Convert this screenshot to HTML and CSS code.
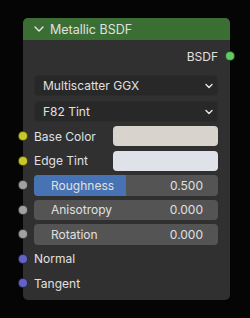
FILE: index.html
```html
<!DOCTYPE html>
<html lang="en">
<head>
    <meta charset="UTF-8">
    <title>Metallic BSDF</title>
    <link rel="stylesheet" href="styles.css">
</head>
<body>
    <div class="node">
        <div class="node-header">
            <svg class="chevron" width="10" height="8" viewBox="0 0 10 8"><path d="M1 2 L5 6 L9 2" fill="none" stroke="#e6e6e6" stroke-width="1.4" stroke-linecap="round" stroke-linejoin="round"/></svg>
            <span class="title">Metallic BSDF</span>
        </div>

        <div class="node-body">
            <div class="output-row">
                <span>BSDF</span>
                <span class="socket out green"></span>
            </div>

            <div class="dropdown first">
                <span>Multiscatter GGX</span>
                <svg width="8" height="6" viewBox="0 0 8 6"><path d="M1 1.5 L4 4.5 L7 1.5" fill="none" stroke="#e6e6e6" stroke-width="1.4" stroke-linecap="round" stroke-linejoin="round"/></svg>
            </div>
            <div class="dropdown">
                <span>F82 Tint</span>
                <svg width="8" height="6" viewBox="0 0 8 6"><path d="M1 1.5 L4 4.5 L7 1.5" fill="none" stroke="#e6e6e6" stroke-width="1.4" stroke-linecap="round" stroke-linejoin="round"/></svg>
            </div>

            <div class="inputs">
                <div class="row">
                    <span class="socket yellow"></span>
                    <span class="label">Base Color</span>
                    <span class="swatch base"></span>
                </div>
                <div class="row">
                    <span class="socket yellow"></span>
                    <span class="label">Edge Tint</span>
                    <span class="swatch tint"></span>
                </div>
                <div class="row">
                    <span class="socket gray"></span>
                    <div class="slider">
                        <div class="fill" style="width: 50%;"></div>
                        <span class="name">Roughness</span>
                        <span class="value">0.500</span>
                    </div>
                </div>
                <div class="row">
                    <span class="socket gray"></span>
                    <div class="slider">
                        <span class="name">Anisotropy</span>
                        <span class="value">0.000</span>
                    </div>
                </div>
                <div class="row">
                    <span class="socket gray"></span>
                    <div class="slider">
                        <span class="name">Rotation</span>
                        <span class="value">0.000</span>
                    </div>
                </div>
                <div class="row">
                    <span class="socket purple"></span>
                    <span class="label">Normal</span>
                </div>
                <div class="row">
                    <span class="socket purple"></span>
                    <span class="label">Tangent</span>
                </div>
            </div>
        </div>
    </div>
</body>
</html>
```

FILE: styles.css
```css
body {
    margin: 0;
    background: #050505;
    font-family: Inter, "DejaVu Sans", sans-serif;
    font-size: 12px;
    color: #e0e0e0;
}

.node {
    margin: 18px 0 0 23px;
    width: 207px;
    height: 282px;
    background: #303030;
    border-radius: 5px;
}

.node-header {
    height: 22px;
    background: #3a6e33;
    border-radius: 5px 5px 0 0;
    display: flex;
    align-items: center;
    padding-left: 11px;
    gap: 6px;
    font-size: 12.5px;
}

.chevron {
    margin-top: -1px;
}

.node-body {
    padding: 4px 12px 4px 11px;
}

.output-row {
    height: 24px;
    display: flex;
    align-items: center;
    justify-content: flex-end;
    position: relative;
}

.dropdown {
    height: 21px;
    box-sizing: border-box;
    background: #282828;
    border: 1px solid #2c2c2c;
    border-radius: 4px;
    display: flex;
    align-items: center;
    justify-content: space-between;
    padding: 0 4px 0 8px;
    margin-top: 5px;
}

.dropdown.first {
    margin-top: 7px;
}

.inputs {
    margin-top: 2px;
}

.row {
    height: 24.5px;
    display: flex;
    align-items: center;
    position: relative;
}

.label {
    flex: 1;
}

.swatch {
    width: 105px;
    height: 20px;
    border-radius: 4px;
}

.swatch.base {
    background: #d9d3ce;
}

.swatch.tint {
    background: #dfe2e8;
}

.slider {
    flex: 1;
    height: 20.5px;
    background: #545454;
    border-radius: 4px;
    position: relative;
    overflow: hidden;
    display: flex;
    align-items: center;
    justify-content: space-between;
    padding: 0 15px 0 17px;
}

.slider .fill {
    position: absolute;
    left: 0;
    top: 0;
    bottom: 0;
    background: #4772b3;
}

.slider .name,
.slider .value {
    position: relative;
}

.socket {
    position: absolute;
    left: -16px;
    width: 8px;
    height: 8px;
    border-radius: 50%;
    border: 1px solid rgba(0, 0, 0, 0.6);
}

.socket.out {
    left: auto;
    right: -17px;
}

.green { background: #63c763; }
.yellow { background: #c7c729; }
.gray { background: #a1a1a1; }
.purple { background: #6363c7; }
```
